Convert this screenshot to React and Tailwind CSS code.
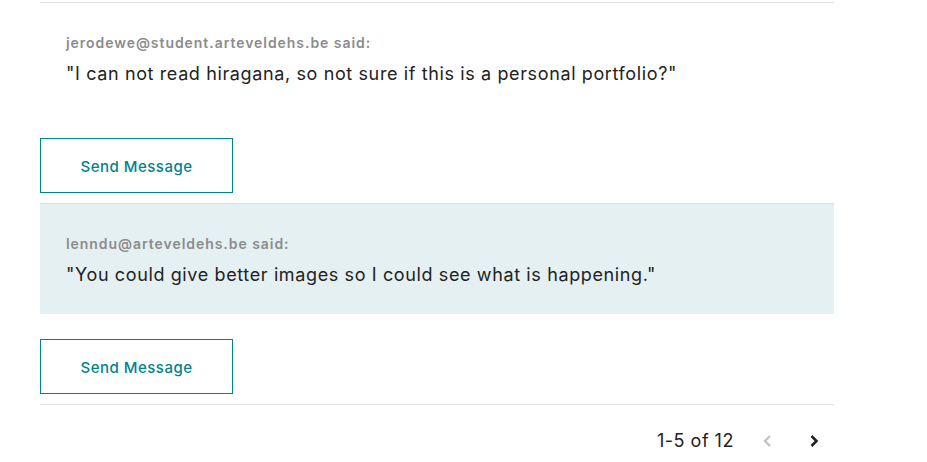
import React from "react";

const font = { fontFamily: 'Inter, "Liberation Sans", Arial, sans-serif' };

function Item({ email, text, highlight }) {
  return (
    <div className="border-t border-[#e0e0e0]">
      <div className={`h-[110px] pl-[26px] pt-[30px] ${highlight ? "bg-[#e5f0f3]" : ""}`}>
        <div className="text-[14px] leading-[20px] font-semibold tracking-[0.95px] text-[#8c8c8c]">{email} said:</div>
        <div className="mt-[7px] text-[18px] leading-[28px] tracking-[0.62px] text-[#222]">"{text}"</div>
      </div>
      <button className="mt-[25px] mb-[10px] h-[55px] w-[193px] border border-[#00838a] bg-white pt-[3px] text-[15px] font-medium tracking-[0.5px] text-[#00838a]">
        Send Message
      </button>
    </div>
  );
}

export default function App() {
  return (
    <div className="bg-white w-[927px] h-[462px] overflow-hidden pt-[2px]" style={font}>
      <div className="ml-[40px] w-[794px]">
        <Item
          email="jerodewe@student.arteveldehs.be"
          text="I can not read hiragana, so not sure if this is a personal portfolio?"
        />
        <Item
          highlight
          email="lenndu@arteveldehs.be"
          text="You could give better images so I could see what is happening."
        />
        <div className="border-t border-[#e0e0e0] pt-[22px] flex items-center">
          <span className="ml-[617px] text-[18px] leading-[28px] tracking-[0.5px] text-[#222]">1-5 of 12</span>
          <svg className="ml-[27px]" width="12" height="14" viewBox="0 0 12 14" fill="none">
            <path d="M9 2 L4 7 L9 12" stroke="#c4c4c4" strokeWidth="2.4" />
          </svg>
          <svg className="ml-[35px]" width="12" height="14" viewBox="0 0 12 14" fill="none">
            <path d="M3.5 2 L8.5 7 L3.5 12" stroke="#222" strokeWidth="2.6" />
          </svg>
        </div>
      </div>
    </div>
  );
}
